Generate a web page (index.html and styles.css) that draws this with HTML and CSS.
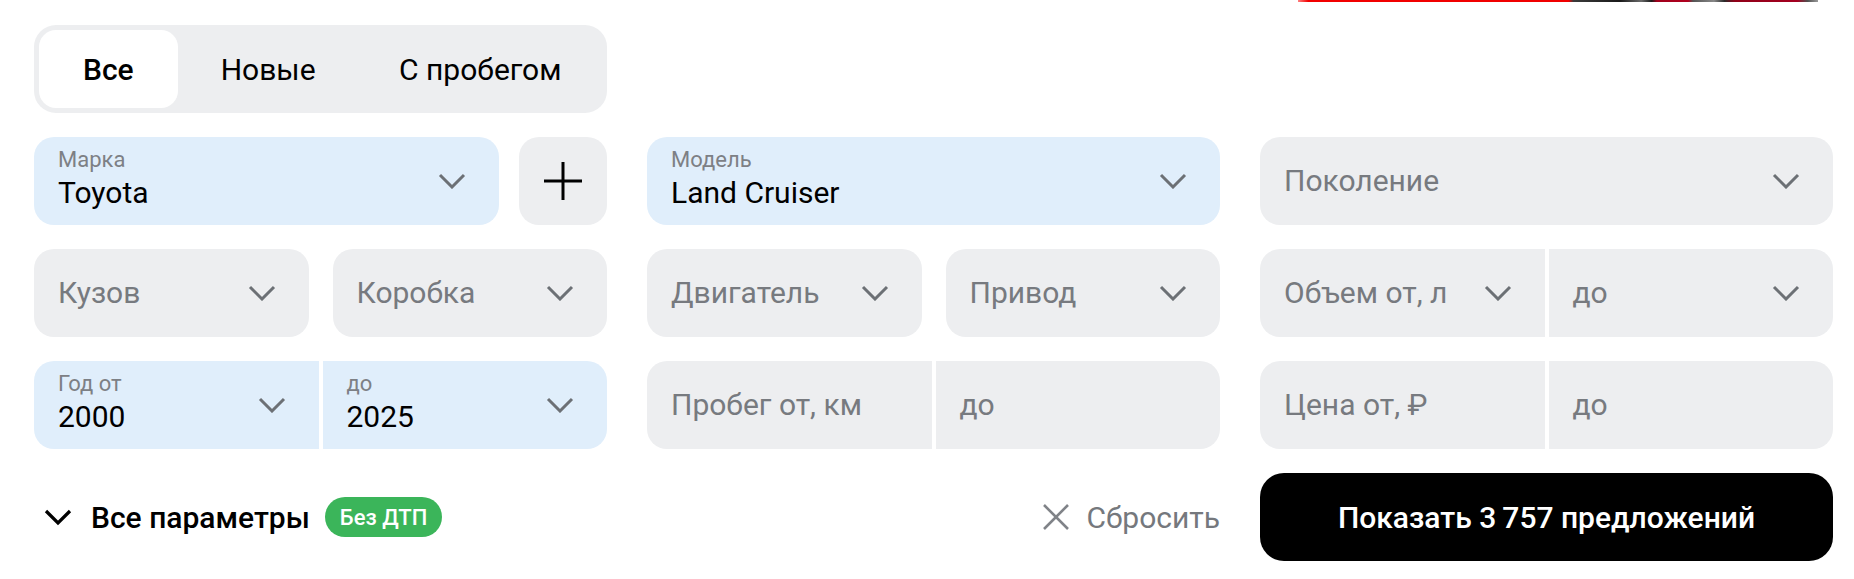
FILE: index.html
```html
<!DOCTYPE html>
<html lang="ru">
<head>
<meta charset="utf-8">
<title>Поиск автомобилей</title>
<link rel="stylesheet" href="styles.css">
</head>
<body>
<div class="page">
  <div class="strip-row"><div class="strip"></div></div>

  <div class="seg">
    <div class="tab tab-active">Все</div>
    <div class="tab">Новые</div>
    <div class="tab tab-last">С пробегом</div>
  </div>

  <div class="form">
    <!-- row 1 -->
    <div class="duo duo-plus">
      <div class="field blue grow">
        <div class="stack"><span class="label">Марка</span><span class="value">Toyota</span></div>
        <svg class="chev" viewBox="0 0 28 16"><polyline points="2,2 14,14 26,2"/></svg>
      </div>
      <div class="plus-btn">
        <svg class="plus" viewBox="0 0 38 38"><path d="M19 0V38M0 19H38"/></svg>
      </div>
    </div>
    <div class="field blue">
      <div class="stack"><span class="label">Модель</span><span class="value">Land Cruiser</span></div>
      <svg class="chev" viewBox="0 0 28 16"><polyline points="2,2 14,14 26,2"/></svg>
    </div>
    <div class="field">
      <span class="ph">Поколение</span>
      <svg class="chev" viewBox="0 0 28 16"><polyline points="2,2 14,14 26,2"/></svg>
    </div>

    <!-- row 2 -->
    <div class="duo">
      <div class="field grow"><span class="ph">Кузов</span><svg class="chev" viewBox="0 0 28 16"><polyline points="2,2 14,14 26,2"/></svg></div>
      <div class="field grow"><span class="ph">Коробка</span><svg class="chev" viewBox="0 0 28 16"><polyline points="2,2 14,14 26,2"/></svg></div>
    </div>
    <div class="duo">
      <div class="field grow"><span class="ph">Двигатель</span><svg class="chev" viewBox="0 0 28 16"><polyline points="2,2 14,14 26,2"/></svg></div>
      <div class="field grow"><span class="ph">Привод</span><svg class="chev" viewBox="0 0 28 16"><polyline points="2,2 14,14 26,2"/></svg></div>
    </div>
    <div class="pair">
      <div class="field grow"><span class="ph">Объем от, л</span><svg class="chev" viewBox="0 0 28 16"><polyline points="2,2 14,14 26,2"/></svg></div>
      <div class="field grow"><span class="ph">до</span><svg class="chev" viewBox="0 0 28 16"><polyline points="2,2 14,14 26,2"/></svg></div>
    </div>

    <!-- row 3 -->
    <div class="pair">
      <div class="field blue grow">
        <div class="stack"><span class="label">Год от</span><span class="value">2000</span></div>
        <svg class="chev" viewBox="0 0 28 16"><polyline points="2,2 14,14 26,2"/></svg>
      </div>
      <div class="field blue grow">
        <div class="stack"><span class="label">до</span><span class="value">2025</span></div>
        <svg class="chev" viewBox="0 0 28 16"><polyline points="2,2 14,14 26,2"/></svg>
      </div>
    </div>
    <div class="pair">
      <div class="field grow"><span class="ph">Пробег от, км</span></div>
      <div class="field grow"><span class="ph">до</span></div>
    </div>
    <div class="pair">
      <div class="field grow"><span class="ph">Цена от, ₽</span></div>
      <div class="field grow"><span class="ph">до</span></div>
    </div>

    <!-- row 4 -->
    <div class="more">
      <svg class="more-chev" viewBox="0 0 28 18"><polyline points="2,3 14,15 26,3"/></svg>
      <span class="more-text">Все параметры</span>
      <span class="badge">Без ДТП</span>
    </div>
    <div class="reset">
      <svg class="reset-x" viewBox="0 0 28 28"><path d="M2 2L26 26M26 2L2 26"/></svg>
      <span>Сбросить</span>
    </div>
    <div class="show-btn">Показать 3&#8201;757 предложений</div>
  </div>
</div>
</body>
</html>
```

FILE: styles.css
```css
* { box-sizing: border-box; }

html, body {
  margin: 0;
  padding: 0;
  background: #ffffff;
}

body {
  font-family: Roboto, "Liberation Sans", Arial, sans-serif;
  color: #000000;
}

.page {
  width: 1854px;
  padding-left: 34px;
}

.strip-row {
  width: 1799px;
  height: 2px;
  display: flex;
  justify-content: flex-end;
  padding-right: 15px;
}

.strip {
  width: 520px;
  height: 2px;
  background: linear-gradient(90deg,
    #ff8080 0%, #f20000 2%, #f00000 52%,
    #3a3a3a 53%, #1a1a1a 62%, #6a6a6a 66%, #1a1a1a 68%,
    #a0001c 69%, #b0001e 75%, #555555 76%, #888888 80%, #2a2a2a 82%,
    #900018 84%, #a40020 96%, #505050 98%, #9a9a9a 100%);
}

/* segmented control */
.seg {
  margin-top: 23px;
  width: 573px;
  height: 88px;
  padding: 5px;
  background: #edeef0;
  border-radius: 22px;
  display: flex;
}

.tab {
  flex: none;
  padding: 0 43px;
  display: flex;
  align-items: center;
  justify-content: center;
  border-radius: 17px;
  font-size: 30px;
  font-weight: 400;
  color: #000000;
  white-space: nowrap;
}

.tab-active {
  background: #ffffff;
  font-weight: 500;
  padding: 0 44px;
}

.tab-last {
  flex: 1 1 auto;
  padding: 0;
}

/* form grid */
.form {
  margin-top: 24px;
  width: 1799px;
  display: grid;
  grid-template-columns: 573px 573px 573px;
  column-gap: 40px;
  row-gap: 24px;
}

.duo {
  display: flex;
  gap: 24px;
}

.duo-plus {
  gap: 20px;
}

.pair {
  display: flex;
  gap: 4px;
}

.pair .field:first-child {
  border-radius: 20px 0 0 20px;
}

.pair .field:last-child {
  border-radius: 0 20px 20px 0;
}

.grow {
  flex: 1 1 0;
  min-width: 0;
}

.field {
  height: 88px;
  border-radius: 20px;
  background: #edeef0;
  display: flex;
  align-items: center;
  justify-content: space-between;
  padding: 0 33px 0 24px;
}

.field.blue {
  background: #e0eefb;
}

.stack {
  display: flex;
  flex-direction: column;
}

.label {
  font-size: 22px;
  line-height: 22px;
  margin-bottom: 2px;
  color: #7d8085;
}

.value {
  font-size: 30px;
  line-height: 40px;
  color: #000000;
}

.ph {
  font-size: 30px;
  line-height: 36px;
  color: #777a7f;
  white-space: nowrap;
}

.chev {
  width: 28px;
  height: 16px;
  flex: none;
  fill: none;
  stroke: #6c7075;
  stroke-width: 3;
}

.plus-btn {
  width: 88px;
  height: 88px;
  flex: none;
  border-radius: 20px;
  background: #edeef0;
  display: flex;
  align-items: center;
  justify-content: center;
}

.plus {
  width: 38px;
  height: 38px;
  fill: none;
  stroke: #000000;
  stroke-width: 3;
}

/* bottom row */
.more {
  height: 88px;
  display: flex;
  align-items: center;
  padding-left: 10px;
}

.more-chev {
  width: 28px;
  height: 18px;
  fill: none;
  stroke: #000000;
  stroke-width: 3.2;
  margin-right: 19px;
}

.more-text {
  font-size: 30px;
  font-weight: 500;
  margin-right: 15px;
  white-space: nowrap;
}

.badge {
  height: 40px;
  padding: 0 15px;
  border-radius: 20px;
  background: #3bb55a;
  color: #ffffff;
  font-size: 22px;
  font-weight: 500;
  display: flex;
  align-items: center;
  white-space: nowrap;
}

.reset {
  height: 88px;
  display: flex;
  align-items: center;
  justify-content: flex-end;
  gap: 16px;
  font-size: 30px;
  font-weight: 400;
  color: #75787d;
}

.reset-x {
  width: 28px;
  height: 28px;
  fill: none;
  stroke: #808388;
  stroke-width: 2.6;
}

.show-btn {
  height: 88px;
  border-radius: 24px;
  background: #000000;
  color: #ffffff;
  font-size: 30px;
  font-weight: 500;
  display: flex;
  align-items: center;
  justify-content: center;
  white-space: nowrap;
}
```
